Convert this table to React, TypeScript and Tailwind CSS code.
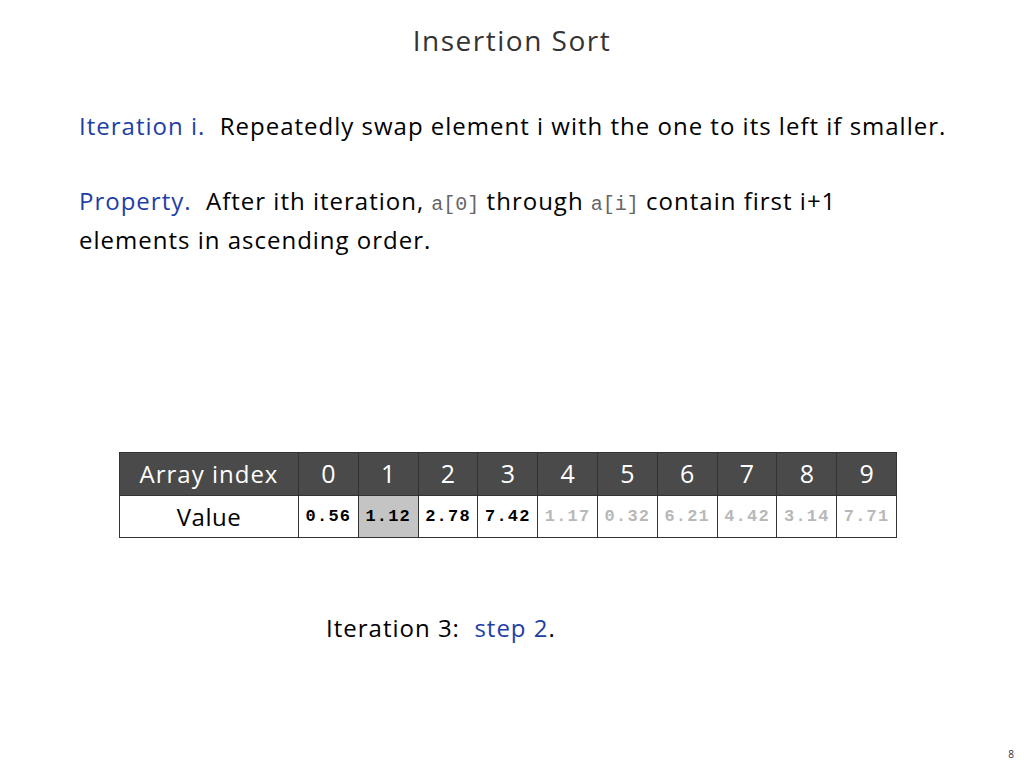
const sans = "font-['Open_Sans','Liberation_Sans',sans-serif]"
const mono = "font-['Liberation_Mono','Courier_New',monospace]"

const values = [
    { v: '0.56', tone: 'done' },
    { v: '1.12', tone: 'active' },
    { v: '2.78', tone: 'done' },
    { v: '7.42', tone: 'done' },
    { v: '1.17', tone: 'todo' },
    { v: '0.32', tone: 'todo' },
    { v: '6.21', tone: 'todo' },
    { v: '4.42', tone: 'todo' },
    { v: '3.14', tone: 'todo' },
    { v: '7.71', tone: 'todo' },
]

const toneClass: Record<string, string> = {
    done: 'bg-white text-black',
    active: 'bg-[#c4c4c4] text-black',
    todo: 'bg-white text-[#b8b8b8]',
}

const ArrayTable = () => (
    <div className="flex justify-start pl-[119px]">
        <div className="grid w-[778px] grid-cols-[178px_repeat(10,minmax(0,1fr))] gap-px border border-[#333] bg-[#333]">
            <div className={`${sans} flex h-[42px] items-center justify-center bg-[#4a4a4a] text-[24px] tracking-[1px] text-white`}>
                Array index
            </div>
            {values.map((_, i) => (
                <div
                    key={i}
                    className={`${sans} flex h-[42px] items-center justify-center bg-[#4a4a4a] text-[25px] text-white`}
                >
                    {i}
                </div>
            ))}
            <div className={`${sans} flex h-[41px] items-center justify-center bg-white text-[24px] tracking-[0.5px] text-black`}>
                Value
            </div>
            {values.map((cell) => (
                <div
                    key={cell.v}
                    className={`${mono} flex h-[41px] items-center justify-center text-[17px] font-bold tracking-[1.2px] ${toneClass[cell.tone]}`}
                >
                    {cell.v}
                </div>
            ))}
        </div>
    </div>
)

export default function App() {
    return (
        <div className={`${sans} relative flex h-[768px] w-[1024px] flex-col bg-white text-black`}>
            <h1 className="pt-[22px] text-center text-[28px] leading-[36px] tracking-[1.5px] text-[#333]">Insertion Sort</h1>

            <div className="whitespace-pre pl-[79px] pt-[50px] text-[24px] tracking-[1px]">
                <p className="leading-[36px]">
                    <span className="text-[#1f3ea6]">Iteration i.</span>
                    {'  '}Repeatedly swap element i with the one to its left if smaller.
                </p>
                <p className="mt-[37px] leading-[39px]">
                    <span className="text-[#1f3ea6]">Property.</span>
                    {'  '}After ith iteration, <span className={`${mono} text-[20px] leading-none tracking-normal text-[#666]`}>a[0]</span> through{' '}
                    <span className={`${mono} text-[20px] leading-none tracking-normal text-[#666]`}>a[i]</span> contain first i+1
                    <br />
                    elements in ascending order.
                </p>
            </div>

            <div className="pt-[193px]">
                <ArrayTable />
            </div>

            <p className="whitespace-pre pl-[326px] pt-[72px] text-[24px] leading-[36px] tracking-[1px]">
                Iteration 3:{'  '}
                <span className="text-[#1f3ea6]">step 2</span>.
            </p>

            <div className="absolute bottom-[6px] right-[10px] text-[10px] text-[#333]">8</div>
        </div>
    )
}
